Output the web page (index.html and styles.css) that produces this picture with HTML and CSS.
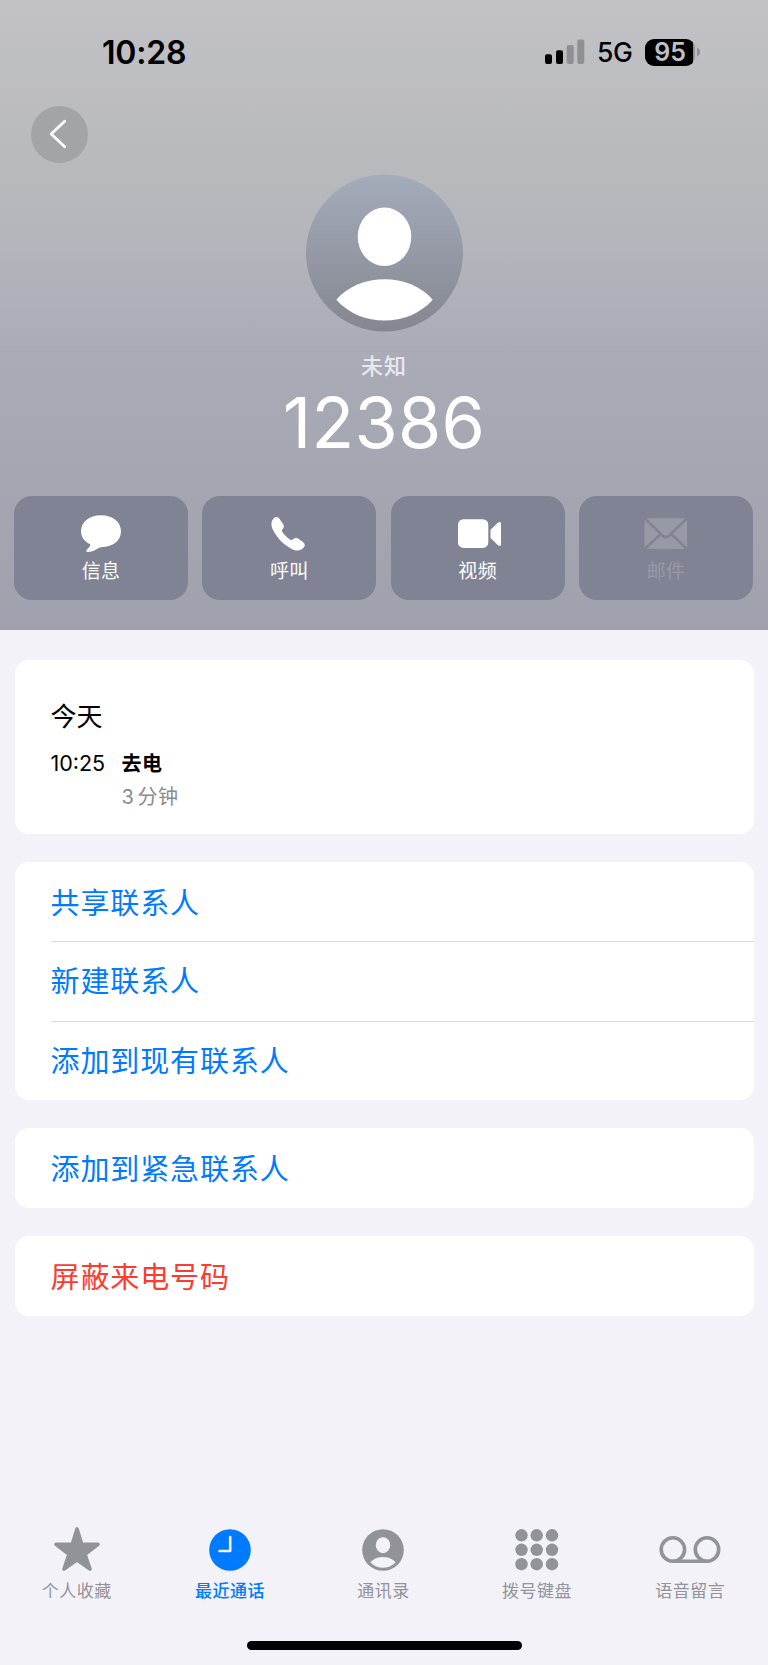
FILE: index.html
```html
<!DOCTYPE html>
<html lang="zh-CN">
<head>
<meta charset="utf-8">
<title>12386</title>
<link rel="stylesheet" href="styles.css">
</head>
<body>
<div class="phone">
  <header class="hero">
    <div class="status">
      <span class="clock">10:28</span>
      <div class="status-right">
        <svg class="signal" width="40" height="26" viewBox="0 0 40 26"><rect x="0" y="15.3" width="7" height="9.7" rx="2"/><rect x="11" y="11.3" width="7" height="13.7" rx="2"/><g opacity=".24"><rect x="21.7" y="6" width="7" height="19" rx="2"/><rect x="32.3" y="0.5" width="7" height="24.5" rx="2"/></g></svg>
        <span class="network">5G</span>
        <span class="battery"><span class="battery-fill">95</span><svg width="4" height="10" viewBox="0 0 4 10"><path d="M0 0.5C4 1.500 4 8.500 0 9.500Z" fill="#8f9093"/></svg></span>
      </div>
    </div>
    <button class="back" aria-label="返回"><svg width="57" height="57" viewBox="0 0 57 57"><path d="M33.700 15.200L20.200 28L33.700 40.800" fill="none" stroke="#fff" stroke-width="2.8" stroke-linecap="round" stroke-linejoin="round"/></svg></button>
    <svg class="avatar" width="157" height="158" viewBox="0 0 157 158"><defs><linearGradient id="face" x1="0" y1="0" x2="0" y2="1"><stop offset="0" stop-color="#a4abba"/><stop offset="1" stop-color="#848790"/></linearGradient></defs><circle cx="78.500" cy="79" r="78.500" fill="url(#face)"/><ellipse cx="78.500" cy="62.800" rx="26.800" ry="29.300" fill="#fff"/><path d="M30.300 125.700C54 98.500 103 98.500 126.700 125.700C102 153.500 55 153.500 30.300 125.700Z" fill="#fff"/></svg>
    <div class="relation">未知</div>
    <h1 class="number">12386</h1>
    <div class="actions">
      <div class="action"><svg width="46" height="40" viewBox="0 0 46 40"><path d="M23 1.300C34.500 1.300 43 8 43 17.300C43 27 34.500 33 24 33C20 33 18 37.500 9.800 38C7.800 38 7.800 36.300 9.200 35.200C11 33.700 12.500 32 12.300 30.300C6.500 27.800 3 23 3 17.300C3 8 11.500 1.300 23 1.300Z"/></svg><span>信息</span></div>
      <div class="action"><svg width="46" height="40" viewBox="0 0 46 40"><path d="M7.800 4.200C10 2.200 12.300 3.200 13.600 5.100L17 9.900C18.300 11.900 18.200 13.300 16.700 14.900C15.500 16.100 15.700 17 16.600 18.300C18.400 20.900 21 23.500 23.500 25.300C24.800 26.200 25.900 26.400 27 25.300C28.700 23.600 30.100 23.300 32 24.600L36.600 27.700C39 29.400 39.600 31.400 37.700 33.600C34.800 37 30.700 37.400 25.700 34.900C18.300 31.200 11.200 24.100 7.300 16.500C4.800 11.500 4.800 7 7.800 4.200Z"/></svg><span>呼叫</span></div>
      <div class="action"><svg width="46" height="40" viewBox="0 0 46 40"><rect x="3" y="5.200" width="30.300" height="28.700" rx="5.500"/><path d="M35.500 15.700L42.800 8.800C44.800 7.200 46 7.800 46 10V30C46 32 44.800 32.500 42.800 31L35.500 24Z"/></svg><span>视频</span></div>
      <div class="action disabled"><svg width="46" height="40" viewBox="0 0 46 40"><path d="M3.600 4.200H42.200L25.300 20.500Q22.800 22.700 20.300 20.500ZM1.500 6L16 19.800L1.500 33.200ZM44 6V33.200L29.800 19.800ZM3.700 35.100L17.700 21.700L19.500 23.300Q22.800 25.800 26.200 23.300L28 21.700L42 35.100Z"/></svg><span>邮件</span></div>
    </div>
  </header>
  <main class="cards">
    <section class="card calls">
      <div class="day">今天</div>
      <div class="call"><span class="time">10:25</span><div><div class="kind">去电</div><div class="length">3 分钟</div></div></div>
    </section>
    <section class="card"><div class="row">共享联系人</div><div class="row">新建联系人</div><div class="row">添加到现有联系人</div></section>
    <section class="card"><div class="row">添加到紧急联系人</div></section>
    <section class="card"><div class="row danger">屏蔽来电号码</div></section>
  </main>
  <nav class="tabs">
    <div class="tab"><svg width="64" height="48" viewBox="0 0 64 48"><path d="M32 3L36.500 17.600Q36.800 18.300 37.600 18.300H53L40.700 27.700Q40.100 28.200 40.300 29L45 43L32.800 34.500Q32 34 31.200 34.500L19 43L23.700 29Q23.900 28.200 23.300 27.700L11 18.300H26.400Q27.200 18.300 27.500 17.600Z" stroke="currentColor" stroke-width="3.600" stroke-linejoin="round"/></svg><span>个人收藏</span></div>
    <div class="tab active"><svg width="64" height="48" viewBox="0 0 64 48"><circle cx="32" cy="24" r="20.800"/><path d="M32.200 11V25H21.500" fill="none" stroke="#f2f2f8" stroke-width="2.600" stroke-linecap="round" stroke-linejoin="round"/></svg><span>最近通话</span></div>
    <div class="tab"><svg width="64" height="48" viewBox="0 0 64 48"><circle cx="32" cy="24" r="20.800"/><ellipse cx="32" cy="19.200" rx="7.200" ry="8" fill="#f2f2f8"/><path d="M19.300 36.200C25.500 29.300 38.500 29.300 44.700 36.200C37.500 43.600 26.500 43.600 19.300 36.200Z" fill="#f2f2f8"/></svg><span>通讯录</span></div>
    <div class="tab"><svg width="64" height="48" viewBox="0 0 64 48"><g><circle cx="16.500" cy="9.300" r="6.200"/><circle cx="31.700" cy="9.300" r="6.200"/><circle cx="47" cy="9.300" r="6.200"/><circle cx="16.500" cy="23.800" r="6.200"/><circle cx="31.700" cy="23.800" r="6.200"/><circle cx="47" cy="23.800" r="6.200"/><circle cx="16.500" cy="38.200" r="6.200"/><circle cx="31.700" cy="38.200" r="6.200"/><circle cx="47" cy="38.200" r="6.200"/></g></svg><span>拨号键盘</span></div>
    <div class="tab"><svg width="64" height="48" viewBox="0 0 64 48"><g fill="none" stroke="currentColor" stroke-width="3.600"><circle cx="14.900" cy="23.500" r="11.700"/><circle cx="49" cy="23.500" r="11.700"/><path d="M14.900 35.200H49"/></g></svg><span>语音留言</span></div>
  </nav>
  <div class="home-bar"></div>
</div>
</body>
</html>
```

FILE: styles.css
```css
* { box-sizing: border-box; }
body {
  margin: 0;
  background: #f2f2f8;
  font-family: Inter, "Noto Sans CJK SC", sans-serif;
}
svg { display: block; fill: currentColor; }
.phone {
  width: 768px;
  height: 1665px;
  display: flex;
  flex-direction: column;
  overflow: hidden;
}
.hero {
  height: 630px;
  flex: none;
  padding-top: 33px;
  display: flex;
  flex-direction: column;
  align-items: center;
  color: #fff;
  background: linear-gradient(#c2c2c6 0, #b9babd 150px, #b2b5bb 250px, #a9acb7 350px, #a4a6b2 470px, #9fa1ae 630px);
}
.status {
  width: 100%;
  height: 40px;
  padding: 0 67px 0 102px;
  display: flex;
  justify-content: space-between;
  align-items: center;
  color: #000;
}
.clock { font-size: 32px; line-height: 40px; font-weight: 600; letter-spacing: -0.2px; }
.status-right { display: flex; align-items: center; margin-top: -2px; }
.network { margin-left: 12px; width: 36px; font-size: 26.500px; line-height: 40px; font-weight: 450; letter-spacing: -0.5px; }
.battery { margin-left: 12px; display: flex; align-items: center; gap: 2px; }
.battery-fill {
  width: 50px;
  height: 27px;
  border-radius: 9px;
  background: linear-gradient(90deg, #000 48px, #8f9093 48px);
  color: #c0c0c4;
  font-size: 25px;
  font-weight: 600;
  line-height: 27px;
  text-align: center;
}
.back {
  width: 57px;
  height: 57px;
  margin: 33px 0 0 30.500px;
  padding: 0;
  align-self: flex-start;
  border: 0;
  border-radius: 50%;
  background: #a3a4a7;
}
.avatar { flex: none; margin-top: 11px; }
.relation { margin-top: 18px; font-size: 22px; line-height: 32px; letter-spacing: 1px; font-weight: 500; color: #e9e9ed; }
.number { margin: 1px 0 0; font-size: 70px; line-height: 80px; font-weight: 400; letter-spacing: 0.300px; }
.actions {
  width: 739px;
  margin: 32.500px 0 0 -1px;
  display: grid;
  grid-template-columns: repeat(4, 1fr);
  gap: 14.400px;
}
.action {
  height: 104px;
  padding-top: 18px;
  border-radius: 18px;
  background: #808393;
  display: flex;
  flex-direction: column;
  align-items: center;
  font-size: 19px;
  line-height: 28px;
  letter-spacing: 0.300px;
}
.action span { margin-top: 4.500px; }
.disabled { color: #9899a7; }
.cards { width: 739px; margin: 30px 0 0 14.500px; display: flex; flex-direction: column; gap: 28.700px; }
.card { background: #fff; border-radius: 14px; overflow: hidden; padding-left: 36px; }
.calls { height: 173.500px; padding-top: 38px; color: #000; }
.day { font-size: 26px; line-height: 38px; }
.call { display: flex; margin-top: 11px; }
.time { width: 71px; font-size: 21.500px; line-height: 32px; letter-spacing: 0; }
.kind { font-size: 20px; line-height: 34px; font-weight: 600; letter-spacing: 0.5px; }
.length { font-size: 20px; line-height: 32px; color: #8a8a8e; letter-spacing: 0.5px; word-spacing: -3px; }
.row {
  height: 79.200px;
  padding-top: 1.500px;
  font-size: 29px;
  line-height: 80px;
  letter-spacing: 0.900px;
  color: #007aff;
}
.row + .row { padding-top: 0; border-top: 1.500px solid #dcdcde; }
.danger { color: #ff3b30; }
.tabs { width: 767px; margin-top: auto; display: grid; grid-template-columns: repeat(5, 1fr); }
.tab { display: flex; flex-direction: column; align-items: center; color: #929299; font-size: 17px; line-height: 26px; letter-spacing: 0.500px; }
.tab span { margin-top: 4px; }
.active { color: #007aff; font-weight: 500; }
.home-bar { flex: none; width: 275px; height: 9px; border-radius: 5px; background: #000; margin: 37px auto 15px; }
```
